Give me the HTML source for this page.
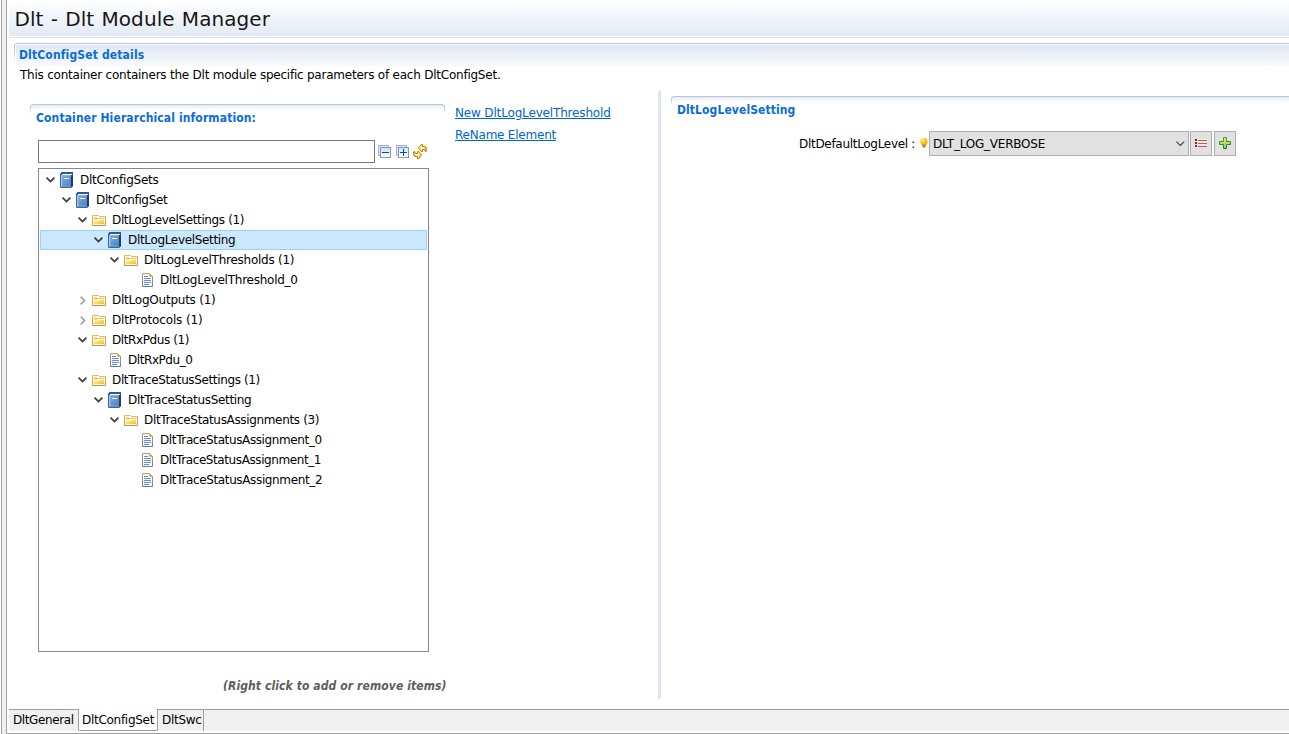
<!DOCTYPE html>
<html lang="en">
<head>
<meta charset="utf-8">
<title>Dlt - Dlt Module Manager</title>
<style>
html,body{margin:0;padding:0;background:#fff;}
body{width:1289px;height:734px;position:relative;overflow:hidden;
  font-family:"DejaVu Sans","Liberation Sans",sans-serif;font-size:12px;color:#000;}
.abs{position:absolute;}
.t{position:absolute;white-space:pre;line-height:20px;height:20px;letter-spacing:-0.28px;}
.tr{letter-spacing:-0.33px;}
.b{font-family:"DejaVu Sans Condensed","DejaVu Sans","Liberation Sans",sans-serif;font-weight:bold;color:#0a6ddb;letter-spacing:0.1px;}
.lnk{color:#0066cc;text-decoration:underline;text-underline-offset:1px;}
/* frame */
#edgeL1{left:1px;top:0;width:1px;height:734px;background:#a0a0a0;}
#edgeFill{left:2px;top:0;width:4px;height:734px;background:#f0f0f0;}
#edgeL2{left:6px;top:0;width:1px;height:734px;background:#a0a0a0;}
#hdr{left:9px;top:0;width:1280px;height:36px;background:linear-gradient(#ffffff 0%,#f6f9fc 30%,#e2eaf4 100%);}
#hdrline{left:9px;top:37px;width:1280px;height:1px;background:#dde5f0;}
#title{left:14.5px;top:4px;font-size:20px;line-height:30px;height:30px;letter-spacing:0.07px;word-spacing:0.8px;color:#161616;}
/* section title bars */
.sec{position:absolute;}
.sec b{position:absolute;left:0;top:0;right:0;height:var(--bh);border:1px solid #b5c6dd;border-bottom:none;border-radius:3px 3px 0 0;box-sizing:border-box;
  -webkit-mask-image:linear-gradient(#000 0%,#000 30%,transparent 100%);mask-image:linear-gradient(#000 0%,#000 30%,transparent 100%);}
.sec i{position:absolute;left:var(--in,2px);top:var(--in,2px);right:var(--in,2px);bottom:0;border-radius:1px 1px 0 0;background:linear-gradient(var(--c0),var(--c1));}
.secR b{border-right:none;border-radius:3px 0 0 0;}
.secR i{right:0;border-radius:1px 0 0 0;}
/* tree */
#filter{left:38px;top:140px;width:337px;height:23px;box-sizing:border-box;border:1px solid #7a7a7a;background:#fff;}
#tree{left:38px;top:168px;width:391px;height:484px;box-sizing:border-box;border:1px solid #828790;background:#fff;}
#sel{left:40px;top:230px;width:387px;height:20px;box-sizing:border-box;border:1px solid #99d1ff;background:#cce8ff;}
svg{position:absolute;overflow:visible;}
/* right */
#sash{left:658px;top:91px;width:3px;height:608px;background:#dfe6f1;}
#combo{left:929px;top:131px;width:260px;height:25px;box-sizing:border-box;border:1px solid #adadad;background:#e1e1e1;}
.btn{position:absolute;top:131px;width:22px;height:25px;box-sizing:border-box;border:1px solid #adadad;background:#e1e1e1;}
/* tabs */
#tabline{left:9px;top:709px;width:1280px;height:1px;background:#a0a0a0;}
#tabbg{left:9px;top:710px;width:1280px;height:21px;background:#f0f0f0;}
#botline{left:6px;top:733px;width:1283px;height:1px;background:#a0a0a0;}
#tabsel{left:78px;top:709px;width:80px;height:22px;box-sizing:border-box;border:1px solid #a0a0a0;border-top:none;border-radius:0 0 2.5px 2.5px;background:#fff;}
#tabgap{left:79px;top:709px;width:78px;height:1px;background:#fff;}
.tsep{position:absolute;top:709px;width:1px;height:22px;background:#a0a0a0;}
</style>
</head>
<body>
<!-- window frame -->
<div class="abs" id="edgeL1"></div><div class="abs" id="edgeFill"></div><div class="abs" id="edgeL2"></div>
<div class="abs" id="hdr"></div><div class="abs" id="hdrline"></div>
<div class="t" id="title">Dlt - Dlt Module Manager</div>

<!-- top section -->
<div class="sec secR" style="left:14px;top:43px;width:1275px;height:23px;--bh:20px;--c0:#dfe7f2;--c1:#f8fafd;"><i></i><b></b></div>
<div class="t b" style="left:19px;top:45px;letter-spacing:0.15px;">DltConfigSet details</div>
<div class="t" style="left:20px;top:65px;letter-spacing:-0.23px;">This container containers the Dlt module specific parameters of each DltConfigSet.</div>

<!-- left section -->
<div class="sec" style="left:30px;top:104px;width:415px;height:6px;--bh:10px;--in:1px;--c0:#e6ebf4;--c1:#ffffff;"><i></i><b></b></div>
<div class="t b" style="left:36px;top:108px;letter-spacing:0.12px;">Container Hierarchical information:</div>
<div class="abs" id="filter"></div>
<div class="abs" id="tree"></div>
<div class="abs" id="sel"></div>

<!-- links -->
<div class="t lnk" style="left:455px;top:103px;letter-spacing:-0.16px;">New DltLogLevelThreshold</div>
<div class="t lnk" style="left:455px;top:125px;letter-spacing:-0.22px;">ReName Element</div>

<!-- hint -->
<div class="t" style="left:223px;top:676px;font-family:'DejaVu Sans Condensed','DejaVu Sans',sans-serif;font-weight:bold;font-style:italic;color:#5e5e5e;letter-spacing:0.1px;">(Right click to add or remove items)</div>

<!-- right pane -->
<div class="abs" id="sash"></div>
<div class="sec secR" style="left:671px;top:96px;width:618px;height:6px;--bh:10px;--in:1px;--c0:#e6ebf4;--c1:#ffffff;"><i></i><b></b></div>
<div class="t b" style="left:677px;top:100px;">DltLogLevelSetting</div>
<div class="t" style="left:799px;top:134px;letter-spacing:-0.3px;">DltDefaultLogLevel :</div>
<div class="abs" id="combo"></div>
<div class="t" style="left:933px;top:134px;letter-spacing:-0.22px;">DLT_LOG_VERBOSE</div>
<div class="btn" style="left:1190px;"></div>
<div class="btn" style="left:1214px;"></div>

<!-- bottom tabs -->
<div class="abs" id="tabline"></div><div class="abs" id="tabbg"></div>
<div class="abs" id="tabsel"></div><div class="abs" id="tabgap"></div>
<div class="tsep" style="left:203px;"></div>
<div class="abs" id="botline"></div>
<div class="t" style="left:13px;top:710px;letter-spacing:-0.4px;">DltGeneral</div>
<div class="t" style="left:82px;top:710px;">DltConfigSet</div>
<div class="t" style="left:162px;top:710px;">DltSwc</div>

<svg style="left:46px;top:177px" width="9" height="6" viewBox="0 0 9 6"><path d="M0.6 0.7L4.5 4.6L8.4 0.7" fill="none" stroke="#3c3c3c" stroke-width="1.7"/></svg>
<svg style="left:60px;top:172px" width="13" height="16" viewBox="0 0 13 16"><rect x="0" y="1" width="12" height="15" rx="1.3" fill="#3a65a3"/><path d="M1.2 0H13V14.3L11 15.3V3H0.4Z" fill="#2f5a98"/><rect x="11" y="3" width="2" height="11.4" fill="#1e3c69"/><rect x="2" y="2" width="10" height="1" fill="#ffffff"/><rect x="1" y="3" width="10" height="11.6" fill="#86b1db"/><rect x="2.6" y="4" width="8.4" height="9.8" fill="url(#gBook)"/><rect x="1" y="3" width="1" height="11.6" fill="#a9cae8"/><rect x="4" y="6" width="5" height="1" fill="#ffffff"/></svg>
<div class="t" style="left:80px;top:170px;letter-spacing:-0.250px;">DltConfigSets</div>
<svg style="left:62px;top:197px" width="9" height="6" viewBox="0 0 9 6"><path d="M0.6 0.7L4.5 4.6L8.4 0.7" fill="none" stroke="#3c3c3c" stroke-width="1.7"/></svg>
<svg style="left:76px;top:192px" width="13" height="16" viewBox="0 0 13 16"><rect x="0" y="1" width="12" height="15" rx="1.3" fill="#3a65a3"/><path d="M1.2 0H13V14.3L11 15.3V3H0.4Z" fill="#2f5a98"/><rect x="11" y="3" width="2" height="11.4" fill="#1e3c69"/><rect x="2" y="2" width="10" height="1" fill="#ffffff"/><rect x="1" y="3" width="10" height="11.6" fill="#86b1db"/><rect x="2.6" y="4" width="8.4" height="9.8" fill="url(#gBook)"/><rect x="1" y="3" width="1" height="11.6" fill="#a9cae8"/><rect x="4" y="6" width="5" height="1" fill="#ffffff"/></svg>
<div class="t" style="left:96px;top:190px;letter-spacing:-0.350px;">DltConfigSet</div>
<svg style="left:78px;top:217px" width="9" height="6" viewBox="0 0 9 6"><path d="M0.6 0.7L4.5 4.6L8.4 0.7" fill="none" stroke="#3c3c3c" stroke-width="1.7"/></svg>
<svg style="left:92px;top:215px" width="14" height="11" viewBox="0 0 14 11"><path d="M0.5 10.5V0.5H6.5L7.5 1.5H13.5V10.5Z" fill="#fffdf5" stroke="url(#gFoldS)" stroke-width="1" stroke-linejoin="round"/><rect x="2" y="2" width="3" height="3" fill="#f7dc7a"/><rect x="2" y="3" width="10" height="1" fill="#ecc75c"/><path d="M2 9V6H5.2L6.2 5H12V9Z" fill="url(#gFoldF)"/></svg>
<div class="t" style="left:112px;top:210px;letter-spacing:-0.361px;">DltLogLevelSettings (1)</div>
<svg style="left:94px;top:237px" width="9" height="6" viewBox="0 0 9 6"><path d="M0.6 0.7L4.5 4.6L8.4 0.7" fill="none" stroke="#3c3c3c" stroke-width="1.7"/></svg>
<svg style="left:108px;top:232px" width="13" height="16" viewBox="0 0 13 16"><rect x="0" y="1" width="12" height="15" rx="1.3" fill="#3a65a3"/><path d="M1.2 0H13V14.3L11 15.3V3H0.4Z" fill="#2f5a98"/><rect x="11" y="3" width="2" height="11.4" fill="#1e3c69"/><rect x="2" y="2" width="10" height="1" fill="#ffffff"/><rect x="1" y="3" width="10" height="11.6" fill="#86b1db"/><rect x="2.6" y="4" width="8.4" height="9.8" fill="url(#gBook)"/><rect x="1" y="3" width="1" height="11.6" fill="#a9cae8"/><rect x="4" y="6" width="5" height="1" fill="#ffffff"/></svg>
<div class="t" style="left:128px;top:230px;letter-spacing:-0.334px;">DltLogLevelSetting</div>
<svg style="left:110px;top:257px" width="9" height="6" viewBox="0 0 9 6"><path d="M0.6 0.7L4.5 4.6L8.4 0.7" fill="none" stroke="#3c3c3c" stroke-width="1.7"/></svg>
<svg style="left:124px;top:255px" width="14" height="11" viewBox="0 0 14 11"><path d="M0.5 10.5V0.5H6.5L7.5 1.5H13.5V10.5Z" fill="#fffdf5" stroke="url(#gFoldS)" stroke-width="1" stroke-linejoin="round"/><rect x="2" y="2" width="3" height="3" fill="#f7dc7a"/><rect x="2" y="3" width="10" height="1" fill="#ecc75c"/><path d="M2 9V6H5.2L6.2 5H12V9Z" fill="url(#gFoldF)"/></svg>
<div class="t" style="left:144px;top:250px;letter-spacing:-0.253px;">DltLogLevelThresholds (1)</div>
<svg style="left:142px;top:273px" width="11" height="14" viewBox="0 0 11 14"><path d="M0.5 0.5H7.5L10.5 3.5V13.5H0.5Z" fill="#f4f8ff" stroke="url(#gFileS)" stroke-width="1"/><path d="M7.5 0.5V3.5H10.5Z" fill="#dfa740" stroke="#c9a24a" stroke-width=".6"/><rect x="2" y="3" width="4" height="1" fill="#6f8bc4"/><rect x="2" y="5" width="7" height="1" fill="#6f8bc4"/><rect x="2" y="7" width="7" height="1" fill="#6f8bc4"/><rect x="2" y="9" width="7" height="1" fill="#6f8bc4"/><rect x="2" y="11" width="5" height="1" fill="#6f8bc4"/></svg>
<div class="t" style="left:160px;top:270px;letter-spacing:-0.246px;">DltLogLevelThreshold_0</div>
<svg style="left:80px;top:296px" width="6" height="9" viewBox="0 0 6 9"><path d="M0.7 0.6L4.6 4.5L0.7 8.4" fill="none" stroke="#a0a0a0" stroke-width="1.6"/></svg>
<svg style="left:92px;top:295px" width="14" height="11" viewBox="0 0 14 11"><path d="M0.5 10.5V0.5H6.5L7.5 1.5H13.5V10.5Z" fill="#fffdf5" stroke="url(#gFoldS)" stroke-width="1" stroke-linejoin="round"/><rect x="2" y="2" width="3" height="3" fill="#f7dc7a"/><rect x="2" y="3" width="10" height="1" fill="#ecc75c"/><path d="M2 9V6H5.2L6.2 5H12V9Z" fill="url(#gFoldF)"/></svg>
<div class="t" style="left:112px;top:290px;letter-spacing:-0.231px;">DltLogOutputs (1)</div>
<svg style="left:80px;top:316px" width="6" height="9" viewBox="0 0 6 9"><path d="M0.7 0.6L4.6 4.5L0.7 8.4" fill="none" stroke="#a0a0a0" stroke-width="1.6"/></svg>
<svg style="left:92px;top:315px" width="14" height="11" viewBox="0 0 14 11"><path d="M0.5 10.5V0.5H6.5L7.5 1.5H13.5V10.5Z" fill="#fffdf5" stroke="url(#gFoldS)" stroke-width="1" stroke-linejoin="round"/><rect x="2" y="2" width="3" height="3" fill="#f7dc7a"/><rect x="2" y="3" width="10" height="1" fill="#ecc75c"/><path d="M2 9V6H5.2L6.2 5H12V9Z" fill="url(#gFoldF)"/></svg>
<div class="t" style="left:112px;top:310px;letter-spacing:-0.140px;">DltProtocols (1)</div>
<svg style="left:78px;top:337px" width="9" height="6" viewBox="0 0 9 6"><path d="M0.6 0.7L4.5 4.6L8.4 0.7" fill="none" stroke="#3c3c3c" stroke-width="1.7"/></svg>
<svg style="left:92px;top:335px" width="14" height="11" viewBox="0 0 14 11"><path d="M0.5 10.5V0.5H6.5L7.5 1.5H13.5V10.5Z" fill="#fffdf5" stroke="url(#gFoldS)" stroke-width="1" stroke-linejoin="round"/><rect x="2" y="2" width="3" height="3" fill="#f7dc7a"/><rect x="2" y="3" width="10" height="1" fill="#ecc75c"/><path d="M2 9V6H5.2L6.2 5H12V9Z" fill="url(#gFoldF)"/></svg>
<div class="t" style="left:112px;top:330px;letter-spacing:-0.404px;">DltRxPdus (1)</div>
<svg style="left:110px;top:353px" width="11" height="14" viewBox="0 0 11 14"><path d="M0.5 0.5H7.5L10.5 3.5V13.5H0.5Z" fill="#f4f8ff" stroke="url(#gFileS)" stroke-width="1"/><path d="M7.5 0.5V3.5H10.5Z" fill="#dfa740" stroke="#c9a24a" stroke-width=".6"/><rect x="2" y="3" width="4" height="1" fill="#6f8bc4"/><rect x="2" y="5" width="7" height="1" fill="#6f8bc4"/><rect x="2" y="7" width="7" height="1" fill="#6f8bc4"/><rect x="2" y="9" width="7" height="1" fill="#6f8bc4"/><rect x="2" y="11" width="5" height="1" fill="#6f8bc4"/></svg>
<div class="t" style="left:128px;top:350px;letter-spacing:-0.434px;">DltRxPdu_0</div>
<svg style="left:78px;top:377px" width="9" height="6" viewBox="0 0 9 6"><path d="M0.6 0.7L4.5 4.6L8.4 0.7" fill="none" stroke="#3c3c3c" stroke-width="1.7"/></svg>
<svg style="left:92px;top:375px" width="14" height="11" viewBox="0 0 14 11"><path d="M0.5 10.5V0.5H6.5L7.5 1.5H13.5V10.5Z" fill="#fffdf5" stroke="url(#gFoldS)" stroke-width="1" stroke-linejoin="round"/><rect x="2" y="2" width="3" height="3" fill="#f7dc7a"/><rect x="2" y="3" width="10" height="1" fill="#ecc75c"/><path d="M2 9V6H5.2L6.2 5H12V9Z" fill="url(#gFoldF)"/></svg>
<div class="t" style="left:112px;top:370px;letter-spacing:-0.364px;">DltTraceStatusSettings (1)</div>
<svg style="left:94px;top:397px" width="9" height="6" viewBox="0 0 9 6"><path d="M0.6 0.7L4.5 4.6L8.4 0.7" fill="none" stroke="#3c3c3c" stroke-width="1.7"/></svg>
<svg style="left:108px;top:392px" width="13" height="16" viewBox="0 0 13 16"><rect x="0" y="1" width="12" height="15" rx="1.3" fill="#3a65a3"/><path d="M1.2 0H13V14.3L11 15.3V3H0.4Z" fill="#2f5a98"/><rect x="11" y="3" width="2" height="11.4" fill="#1e3c69"/><rect x="2" y="2" width="10" height="1" fill="#ffffff"/><rect x="1" y="3" width="10" height="11.6" fill="#86b1db"/><rect x="2.6" y="4" width="8.4" height="9.8" fill="url(#gBook)"/><rect x="1" y="3" width="1" height="11.6" fill="#a9cae8"/><rect x="4" y="6" width="5" height="1" fill="#ffffff"/></svg>
<div class="t" style="left:128px;top:390px;letter-spacing:-0.334px;">DltTraceStatusSetting</div>
<svg style="left:110px;top:417px" width="9" height="6" viewBox="0 0 9 6"><path d="M0.6 0.7L4.5 4.6L8.4 0.7" fill="none" stroke="#3c3c3c" stroke-width="1.7"/></svg>
<svg style="left:124px;top:415px" width="14" height="11" viewBox="0 0 14 11"><path d="M0.5 10.5V0.5H6.5L7.5 1.5H13.5V10.5Z" fill="#fffdf5" stroke="url(#gFoldS)" stroke-width="1" stroke-linejoin="round"/><rect x="2" y="2" width="3" height="3" fill="#f7dc7a"/><rect x="2" y="3" width="10" height="1" fill="#ecc75c"/><path d="M2 9V6H5.2L6.2 5H12V9Z" fill="url(#gFoldF)"/></svg>
<div class="t" style="left:144px;top:410px;letter-spacing:-0.344px;">DltTraceStatusAssignments (3)</div>
<svg style="left:142px;top:433px" width="11" height="14" viewBox="0 0 11 14"><path d="M0.5 0.5H7.5L10.5 3.5V13.5H0.5Z" fill="#f4f8ff" stroke="url(#gFileS)" stroke-width="1"/><path d="M7.5 0.5V3.5H10.5Z" fill="#dfa740" stroke="#c9a24a" stroke-width=".6"/><rect x="2" y="3" width="4" height="1" fill="#6f8bc4"/><rect x="2" y="5" width="7" height="1" fill="#6f8bc4"/><rect x="2" y="7" width="7" height="1" fill="#6f8bc4"/><rect x="2" y="9" width="7" height="1" fill="#6f8bc4"/><rect x="2" y="11" width="5" height="1" fill="#6f8bc4"/></svg>
<div class="t" style="left:160px;top:430px;letter-spacing:-0.379px;">DltTraceStatusAssignment_0</div>
<svg style="left:142px;top:453px" width="11" height="14" viewBox="0 0 11 14"><path d="M0.5 0.5H7.5L10.5 3.5V13.5H0.5Z" fill="#f4f8ff" stroke="url(#gFileS)" stroke-width="1"/><path d="M7.5 0.5V3.5H10.5Z" fill="#dfa740" stroke="#c9a24a" stroke-width=".6"/><rect x="2" y="3" width="4" height="1" fill="#6f8bc4"/><rect x="2" y="5" width="7" height="1" fill="#6f8bc4"/><rect x="2" y="7" width="7" height="1" fill="#6f8bc4"/><rect x="2" y="9" width="7" height="1" fill="#6f8bc4"/><rect x="2" y="11" width="5" height="1" fill="#6f8bc4"/></svg>
<div class="t" style="left:160px;top:450px;letter-spacing:-0.407px;">DltTraceStatusAssignment_1</div>
<svg style="left:142px;top:473px" width="11" height="14" viewBox="0 0 11 14"><path d="M0.5 0.5H7.5L10.5 3.5V13.5H0.5Z" fill="#f4f8ff" stroke="url(#gFileS)" stroke-width="1"/><path d="M7.5 0.5V3.5H10.5Z" fill="#dfa740" stroke="#c9a24a" stroke-width=".6"/><rect x="2" y="3" width="4" height="1" fill="#6f8bc4"/><rect x="2" y="5" width="7" height="1" fill="#6f8bc4"/><rect x="2" y="7" width="7" height="1" fill="#6f8bc4"/><rect x="2" y="9" width="7" height="1" fill="#6f8bc4"/><rect x="2" y="11" width="5" height="1" fill="#6f8bc4"/></svg>
<div class="t" style="left:160px;top:470px;letter-spacing:-0.364px;">DltTraceStatusAssignment_2</div>
<svg width="0" height="0" style="left:0;top:0"><defs>
<linearGradient id="gBook" x1="0" y1="0" x2="1" y2="1"><stop offset="0" stop-color="#7dadda"/><stop offset="1" stop-color="#4a82c3"/></linearGradient>
<linearGradient id="gFoldS" x1="0" y1="0" x2="0" y2="1"><stop offset="0" stop-color="#e3bd4e"/><stop offset="1" stop-color="#df8a2e"/></linearGradient>
<linearGradient id="gFoldF" x1="0" y1="0" x2="1" y2="1"><stop offset="0" stop-color="#fdf0b4"/><stop offset="1" stop-color="#efc51c"/></linearGradient>
<linearGradient id="gFileS" x1="0" y1="0" x2="0" y2="1"><stop offset="0" stop-color="#b3a268"/><stop offset="1" stop-color="#6a7aaa"/></linearGradient>
<linearGradient id="gSq" x1="0" y1="0" x2="0" y2="1"><stop offset="0" stop-color="#c6e6fb"/><stop offset="1" stop-color="#ffffff"/></linearGradient>
<linearGradient id="gPlus" x1="0" y1="0" x2="0" y2="1"><stop offset="0" stop-color="#f2ee5a"/><stop offset="1" stop-color="#9cc43e"/></linearGradient>
<linearGradient id="gPlusS" x1="0" y1="0" x2="0" y2="1"><stop offset="0" stop-color="#3aa25a"/><stop offset="1" stop-color="#1f7344"/></linearGradient>
<linearGradient id="gSync" x1="0" y1="0" x2="1" y2="1"><stop offset="0" stop-color="#ffffee"/><stop offset=".5" stop-color="#fff2a8"/><stop offset="1" stop-color="#f6cf50"/></linearGradient>
<radialGradient id="gBulb" cx=".35" cy=".3" r=".8"><stop offset="0" stop-color="#ffe27a"/><stop offset=".45" stop-color="#ffc61a"/><stop offset="1" stop-color="#f6b100"/></radialGradient>
</defs></svg><svg style="left:378px;top:145px" width="13" height="13" viewBox="0 0 13 13"><rect x="0.5" y="0.5" width="10" height="10" fill="#d2e6fa" stroke="#a9b3cf"/><rect x="2.5" y="2.5" width="10" height="10" fill="url(#gSq)" stroke="#8b97b9"/><rect x="4" y="7" width="7" height="1" fill="#174a86"/></svg><svg style="left:396px;top:145px" width="13" height="13" viewBox="0 0 13 13"><rect x="0.5" y="0.5" width="10" height="10" fill="#d2e6fa" stroke="#a9b3cf"/><rect x="2.5" y="2.5" width="10" height="10" fill="url(#gSq)" stroke="#8b97b9"/><rect x="4" y="7" width="7" height="1" fill="#174a86"/><rect x="7" y="4" width="1" height="7" fill="#174a86"/></svg><svg style="left:413px;top:144px" width="14" height="15" viewBox="413 144 14 15"><path d="M418.5 148L421.5 144.5H422.5V146.5H424.5L426.5 148.5V150.5L425.5 151.5L424.5 149.5H422.5V151.5H421.5Z" fill="url(#gSync)" stroke="#c48a0a" stroke-width="1.1" stroke-linejoin="round"/><path d="M421.5 155L418.5 158.5H417.5V156.5H415.5L413.5 154.5V152.5L414.5 151.5L415.5 153.5H417.5V151.5H418.5Z" fill="url(#gSync)" stroke="#c48a0a" stroke-width="1.1" stroke-linejoin="round"/></svg><svg style="left:920px;top:138px" width="8" height="10" viewBox="0 0 8 10"><circle cx="4" cy="3.7" r="3.7" fill="url(#gBulb)"/><path d="M2.1 6.3H5.9L5.4 8.6H2.6Z" fill="#d98a1e"/><rect x="2" y="7.2" width="4" height="1.4" fill="#cf8528"/><rect x="3" y="8.8" width="2" height="1" fill="#8d8d8d"/><path d="M2 2.6L3.6 1.2" stroke="#fff7d8" stroke-width="1" stroke-linecap="round"/></svg><svg style="left:1176px;top:141px" width="9" height="6" viewBox="0 0 9 6"><path d="M0.4 0.6L4.3 4.5L8.2 0.6" fill="none" stroke="#404040" stroke-width="1.15"/></svg><svg style="left:1194px;top:138px" width="14" height="10" viewBox="0 0 14 10"><rect x="3.5" y="1" width="10" height="8.4" fill="#e2f1f4" opacity=".7"/><rect x="1" y="1" width="2" height="2" fill="#7b2b12"/><rect x="1" y="4" width="2" height="2" fill="#7b2b12"/><rect x="1" y="7" width="2" height="2" fill="#7b2b12"/><rect x="4" y="2" width="9" height="1" fill="#c85a3c"/><rect x="4" y="5" width="9" height="1" fill="#c85a3c"/><rect x="4" y="8" width="9" height="1" fill="#c85a3c"/></svg><svg style="left:1219px;top:137px" width="12" height="12" viewBox="0 0 12 12"><path d="M4.5 0.5H7.5V4.5H11.5V7.5H7.5V11.5H4.5V7.5H0.5V4.5H4.5Z" fill="url(#gPlus)" stroke="url(#gPlusS)" stroke-width="1"/></svg>
</body>
</html>
